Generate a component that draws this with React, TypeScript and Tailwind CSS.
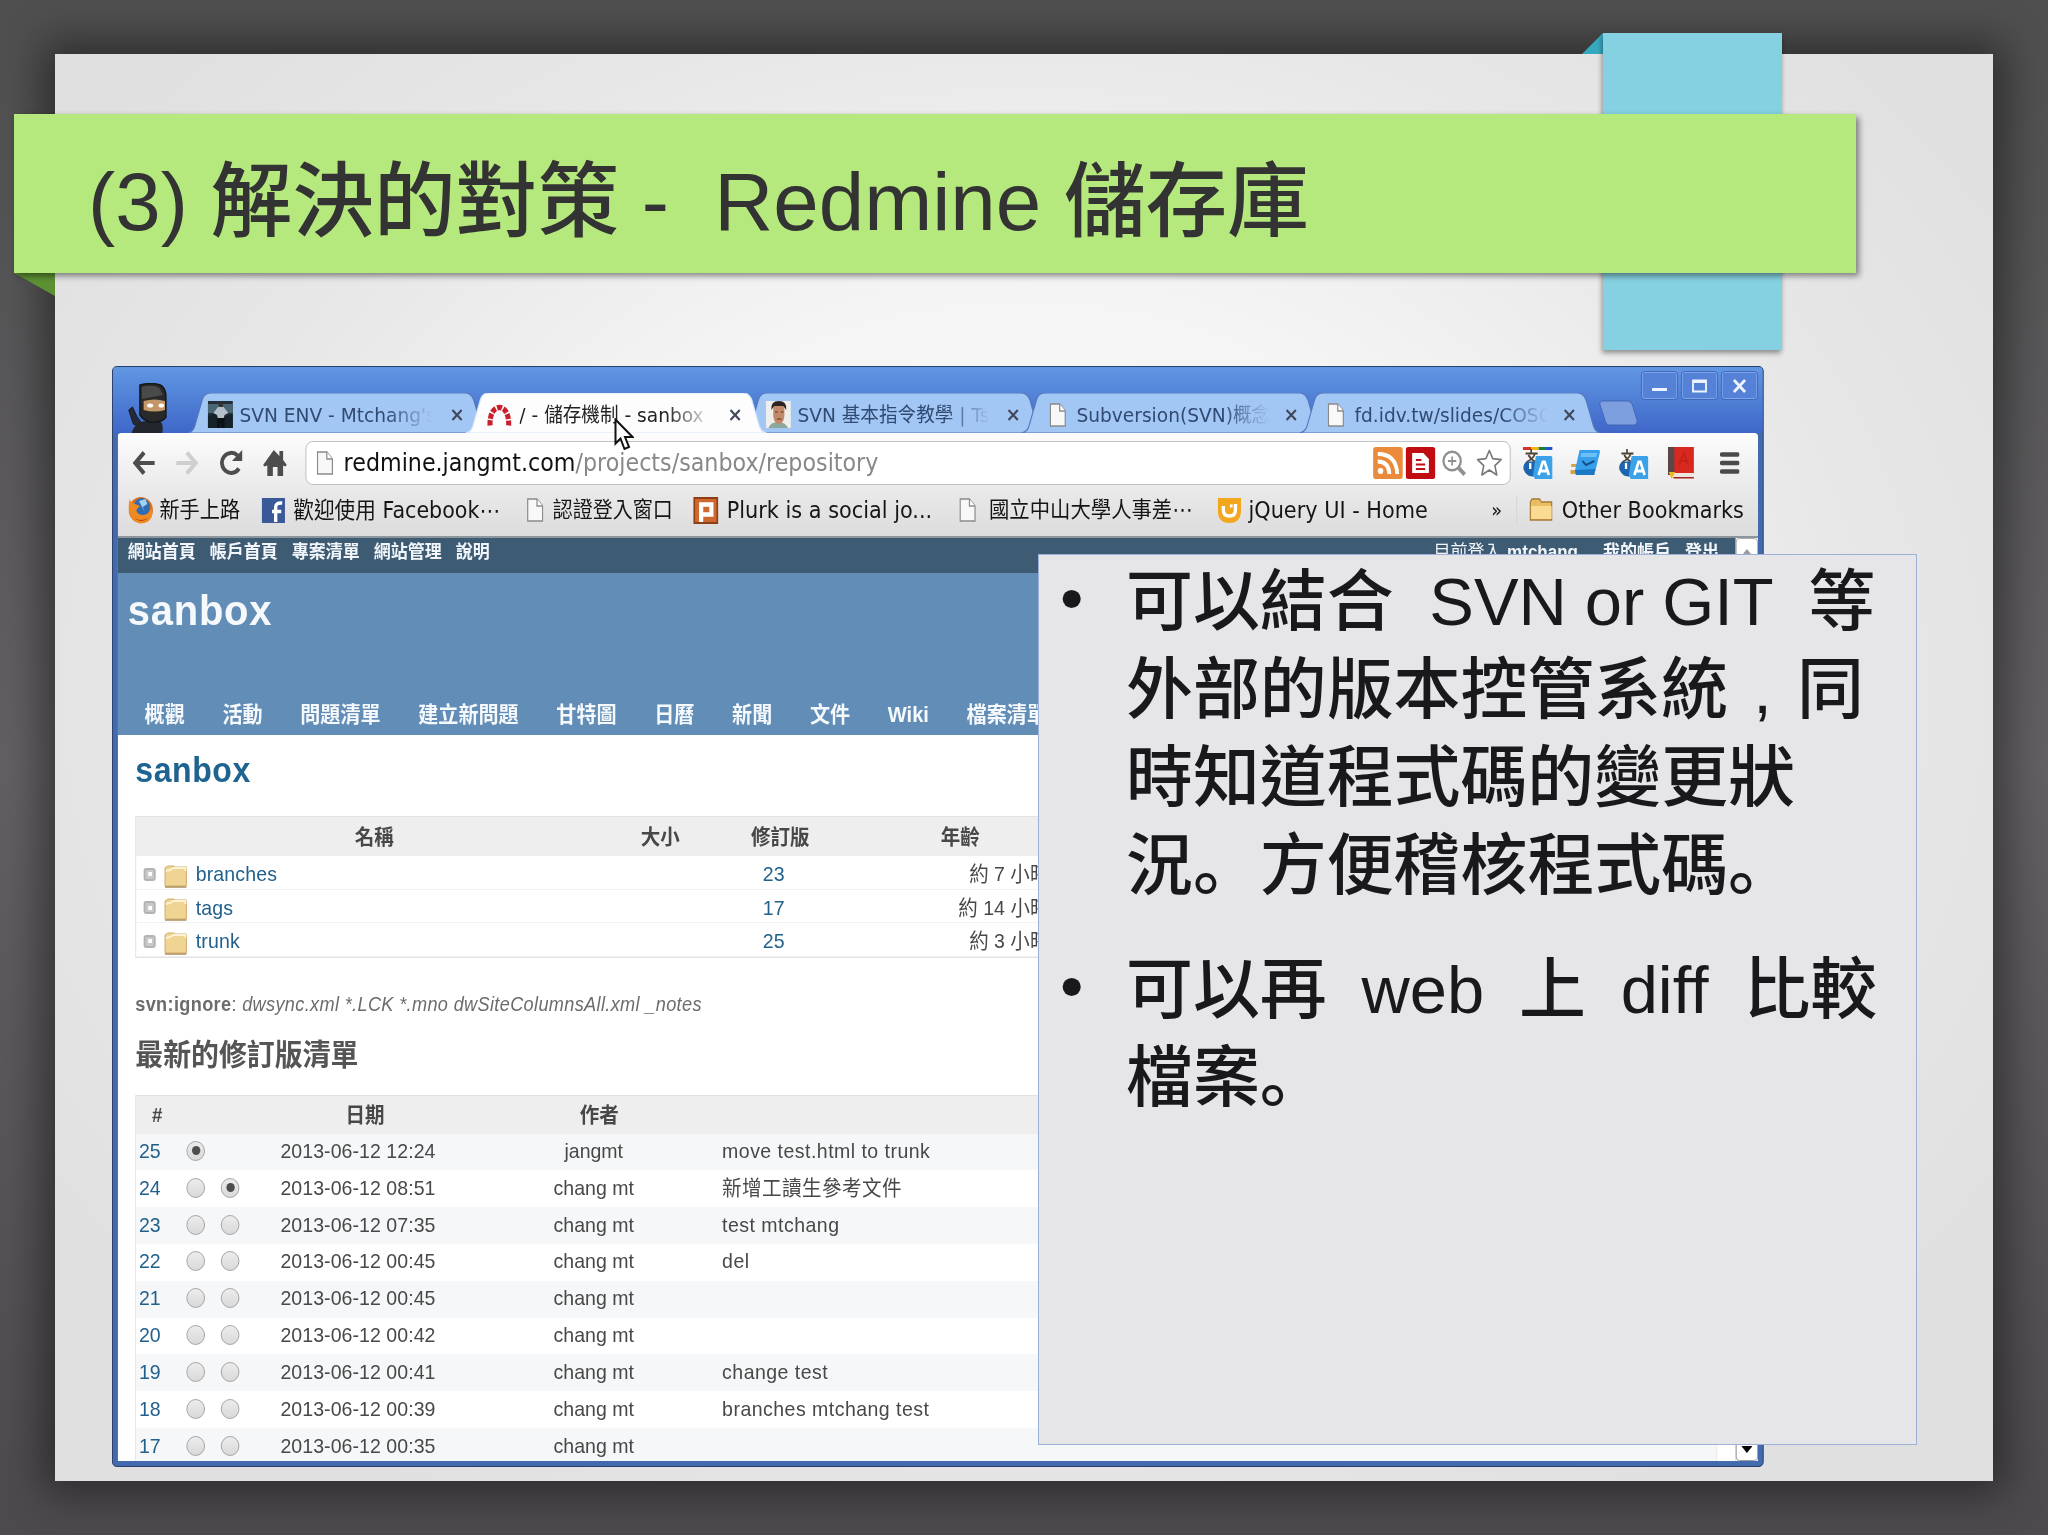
import React from 'react'

type TabType = { title: React.ReactNode; icon: React.ReactNode; active?: boolean; iconWidth: string }
type RevisionType = { id: number; left?: boolean; right?: boolean; hideRight?: boolean; date: string; author: string; comment?: string }

const revisions: RevisionType[] = [
    { id: 25, left: true, hideRight: true, date: '2013-06-12 12:24', author: 'jangmt', comment: 'move test.html to trunk' },
    { id: 24, right: true, date: '2013-06-12 08:51', author: 'chang mt', comment: '新增工讀生參考文件' },
    { id: 23, date: '2013-06-12 07:35', author: 'chang mt', comment: 'test mtchang' },
    { id: 22, date: '2013-06-12 00:45', author: 'chang mt', comment: 'del' },
    { id: 21, date: '2013-06-12 00:45', author: 'chang mt' },
    { id: 20, date: '2013-06-12 00:42', author: 'chang mt' },
    { id: 19, date: '2013-06-12 00:41', author: 'chang mt', comment: 'change test' },
    { id: 18, date: '2013-06-12 00:39', author: 'chang mt', comment: 'branches mtchang test' },
    { id: 17, date: '2013-06-12 00:35', author: 'chang mt' },
]

const folders = [
    { name: 'branches', rev: 23, age: '約 7 小時' },
    { name: 'tags', rev: 17, age: '約 14 小時' },
    { name: 'trunk', rev: 25, age: '約 3 小時' },
]

const menu = ['概觀', '活動', '問題清單', '建立新問題', '甘特圖', '日曆', '新聞', '文件', 'Wiki', '檔案清單']

function PageIcon() {
    return (
        <svg viewBox="0 0 18 24" className="h-6 w-[18px] shrink-0">
            <path d="M1 1h10l6 7v15H1z" fill="#f8f8f8" stroke="#8a8a8a" strokeWidth="1.3" />
            <path d="M11 1v7h6" fill="#fff" stroke="#8a8a8a" strokeWidth="1.3" />
        </svg>
    )
}

function NinjaIcon() {
    return (
        <svg viewBox="0 0 48 50" className="h-[50px] w-12">
            <path d="M1 27l4-3 5 10 5 6-2 4-7-3z" fill="#252a35" stroke="#111827" />
            <path d="M4 50c3-9 10-12 17-12h13c4 2 4 7 3 12z" fill="#23262d" />
            <path d="M13 2q12-3 22 0 6 3 6 12v20q-4 6-16 5-8-1-12-7z" fill="#292929" stroke="#14171c" strokeWidth="1.5" />
            <path d="M15 4q12-3 19 1l4 7-23 4z" fill="#4a4a4a" />
            <path d="M17 18q12-3 23 0v9q-11 3-23 0z" fill="#c49768" />
            <ellipse cx="24" cy="22.500" rx="3.300" ry="2" fill="#fff" />
            <ellipse cx="36" cy="22.500" rx="3" ry="2" fill="#fff" />
        </svg>
    )
}

function MenPhoto() {
    return (
        <svg viewBox="0 0 27 27" className="h-[27px] w-[27px]">
            <path d="M0 0h27v27H0z" fill="#23303a" />
            <path d="M0 3h27v9H0z" fill="#4b6673" />
            <path d="M0 16l8-4 2 3h10l7-2v14H0z" fill="#16222a" />
            <circle cx="14" cy="4" r="2.5" fill="#34302e" />
            <path d="M11 6h6l5 6-4 2-1 4h-6l-1-4-4-2z" fill="#b3bfc9" />
            <path d="M10 17h8v10h-3l-1-6-1 6h-3z" fill="#0d1114" />
        </svg>
    )
}

function RedmineIcon() {
    return (
        <svg viewBox="0 0 27 22" className="h-[22px] w-[27px]">
            <path d="M3.500 21.500C3 11 7 3.500 13.500 3.500S24 11 23.500 21.500" fill="none" stroke="#c8202c" strokeWidth="5.500" strokeDasharray="5.200 1.600" />
        </svg>
    )
}

function FacePhoto() {
    return (
        <svg viewBox="0 0 27 27" className="h-[27px] w-[27px]">
            <path d="M0 0h27v27H0z" fill="#eeeeea" />
            <path d="M3 27q2-6 10-6t11 6z" fill="#8da79c" />
            <path d="M8 4h12v11q-1 8-6 8t-6-8z" fill="#c18a6a" />
            <path d="M6 9q-1-9 8-9t8 9l-3-4H9z" fill="#2c2422" />
            <path d="M10 11h3m3 0h3m-7 7h5" stroke="#5b3327" />
        </svg>
    )
}

const tabs: TabType[] = [
    { title: "SVN ENV - Mtchang's", icon: <MenPhoto />, iconWidth: 'ml-[-2px] w-[34px]' },
    { title: '/ - 儲存機制 - sanbox -', icon: <RedmineIcon />, active: true, iconWidth: 'ml-[-1px] w-[35px]' },
    { title: 'SVN 基本指令教學 | Tsu', icon: <FacePhoto />, iconWidth: 'w-[34px]' },
    { title: 'Subversion(SVN)概念', icon: <PageIcon />, iconWidth: 'ml-[6px] w-[29px]' },
    { title: 'fd.idv.tw/slides/COSC', icon: <PageIcon />, iconWidth: 'ml-[6px] w-[29px]' },
]

function Tab({ tab }: { tab: TabType }) {
    return (
        <div className={tab.active ? 'relative z-10 mr-[-25px] h-10 w-[324px]' : 'relative mr-[-25px] h-10 w-[324px]'}>
            <svg viewBox="0 0 324 40" className="absolute inset-0 h-10 w-[324px]">
                <path
                    d="M0 40q6-1 8-7L16 7q2-7 9-7h274q6 0 9 7l8 26q2 6 8 7z"
                    fill={tab.active ? '#fdfdfe' : '#a3c7f5'}
                    stroke={tab.active ? '#d6e4fa' : '#5578bd'}
                    strokeWidth="1.2"
                />
            </svg>
            <div className="relative flex h-full items-center pl-6 pt-[3px]">
                <span className={tab.iconWidth}>{tab.icon}</span>
                <span className={`w-[226px] whitespace-nowrap text-xl leading-8 mask-[linear-gradient(to_right,black_70%,transparent_92%)] ${tab.active ? 'text-[#222]' : 'text-[#304a70]'}`}>
                    {tab.title}
                </span>
                <svg viewBox="0 0 12 12" className="absolute right-[28px] top-4 h-3 w-3">
                    <path d="M1 1l10 10M11 1L1 11" stroke="#41495a" strokeWidth="2.400" />
                </svg>
            </div>
        </div>
    )
}

function TitleBar() {
    return (
        <div className="flex h-[66px] items-end bg-linear-to-b from-[#6197e2] to-[#3f67c9]">
            <div className="w-[80px] pl-[16px]"><NinjaIcon /></div>
            {tabs.map((tab, i) => <Tab key={i} tab={tab} />)}
            <svg viewBox="0 0 41 26" className="mb-[7px] ml-[23px] h-[26px] w-[41px]">
                <path d="M4 1h27q3 0 5 4l5 16q0 4-3 4H11q-3 0-4-3L1 5q-1-4 3-4z" fill="#7d9fe0" stroke="#4266b4" />
            </svg>
            <div className="ml-auto mr-[6px] flex gap-[5px] self-start pt-[5px]">
                {['min', 'max', 'close'].map((kind) => (
                    <div key={kind} className="flex h-[27px] w-[38px] items-center justify-center rounded-[3px] border border-[#7fa6ec] bg-[#5582d6] outline outline-[#3f68bb]">
                        <svg viewBox="0 0 18 16" className="h-4 w-[18px]" fill="none" stroke="#eef4ff">
                            {kind === 'min' && <path d="M1 11.500h16" strokeWidth="3" />}
                            {kind === 'max' && <path d="M2 2.500h14v11H2zM2 4h14" strokeWidth="2" />}
                            {kind === 'close' && <path d="M3 2l12 12M15 2L3 14" strokeWidth="3" />}
                        </svg>
                    </div>
                ))}
            </div>
        </div>
    )
}

function TranslateIcon({ bar }: { bar?: boolean }) {
    return (
        <svg viewBox="0 0 32 32" className="h-8 w-8">
            {bar && <path d="M0 1.500h9" stroke="#d93025" strokeWidth="3" />}
            {bar && <path d="M9 1.500h8" stroke="#f4b400" strokeWidth="3" />}
            {bar && <path d="M17 1.500h7" stroke="#188038" strokeWidth="3" />}
            {bar && <path d="M24 1.500h8" stroke="#1a56c4" strokeWidth="3" />}
            <path d="M9 2v4M3 6.500h13M13 7q-2 5-9 8M6 8q3 5 8 7" stroke="#4b4336" strokeWidth="1.800" fill="none" />
            <path d="M3 15q-5 6 0 11 4 5 12 3V14z" fill="#1c64ad" />
            <path d="M8 16v6" stroke="#fff" strokeWidth="2.500" />
            <path d="M14 9h16q2 0 2 2v21H13l-2-4z" fill="#3ba2e8" />
            <path d="M17 28l4.500-13h2L28 28M19 24h8" stroke="#fff" strokeWidth="2.800" fill="none" />
        </svg>
    )
}

function Toolbar() {
    return (
        <div className="flex h-[59px] items-center pl-4 font-['DejaVu_Sans','Noto_Sans_CJK_TC',sans-serif]">
            <svg viewBox="0 0 24 24" className="mr-[23px] h-6 w-6" fill="none" stroke="#4d4d4d" strokeWidth="4.200">
                <path d="M12.500 1.500L3 12l9.500 10.500M3 12h21" />
            </svg>
            <svg viewBox="0 0 24 24" className="mr-[22px] h-6 w-6" fill="none" stroke="#cfcfcf" strokeWidth="4.200">
                <path d="M11.500 1.500L21 12l-9.500 10.500M21 12H0" />
            </svg>
            <svg viewBox="0 0 26 26" className="mr-[21px] h-[26px] w-[26px]">
                <path d="M21.500 18.500A10 10 0 1 1 20 5.500" fill="none" stroke="#4d4d4d" strokeWidth="4" />
                <path d="M25 0v11H14z" fill="#4d4d4d" />
            </svg>
            <svg viewBox="0 0 26 26" className="mr-[20px] h-[26px] w-[26px]" fill="#4d4d4d">
                <path d="M12 0l6 6V1h4v9l4 5-1.500 1.500-2.500-1V26h-6v-9h-5v9H5V15.500l-3 1L.500 15z" />
            </svg>
            <div className="flex h-11 w-[1296px] items-center rounded-lg border-[1.5px] border-[#bfbfbf] bg-white pl-[11px] pr-[8px]">
                <PageIcon />
                <span className="ml-[11px] text-[23.900px] leading-10 text-[#111]">redmine.jangmt.com<span className="text-[#888]">/projects/sanbox/repository</span></span>
                <svg viewBox="0 0 32 32" className="ml-auto mr-[3px] h-8 w-8">
                    <rect width="32" height="32" rx="3" fill="#ea8b3c" />
                    <circle cx="8" cy="24" r="3" fill="#fff" />
                    <path d="M5 14.500q12 0 12.500 12.500M5 7q20 0 21 20" fill="none" stroke="#fff" strokeWidth="4" />
                </svg>
                <svg viewBox="0 0 32 32" className="mr-[7px] h-8 w-8">
                    <rect width="32" height="32" rx="3" fill="#c00d12" />
                    <path d="M7 6h12l6 6v14H7z" fill="#fff" />
                    <path d="M11 13h6m-6 4.500h10m-10 4.500h10" stroke="#c00d12" strokeWidth="2.200" />
                </svg>
                <svg viewBox="0 0 26 26" className="mr-[11px] h-[26px] w-[26px]" fill="none" stroke="#909090">
                    <circle cx="11" cy="11" r="9.300" strokeWidth="2.400" />
                    <path d="M6.500 11h9M11 6.500v9" strokeWidth="1.800" />
                    <path d="M18 18l6.500 6.500" strokeWidth="4" />
                </svg>
                <svg viewBox="0 0 28 28" className="h-7 w-7">
                    <path d="M14 1.500l3.700 8.200 9 .9-6.700 6 2 9.400-8-5-8 5 2-9.400-6.700-6 9-.9z" fill="#fff" stroke="#777" strokeWidth="1.700" strokeLinejoin="round" />
                </svg>
            </div>
            <div className="ml-[13px] flex items-center">
                <span className="mr-[19px]"><TranslateIcon bar /></span>
                <svg viewBox="0 0 32 28" className="mr-5 h-[28px] w-8">
                    <path d="M1 15h12v3H1zm-1 6h14v4H0z" fill="#d8a24a" />
                    <path d="M10 1h21q1 0 1 2l-5 19H5z" fill="#36a0ec" />
                    <path d="M12 4h17l-1 4H11z" fill="#6cc0f6" />
                    <path d="M5 21l22-1-1 6H6z" fill="#1b78c4" />
                    <path d="M13 12l4 4 9-4" fill="none" stroke="#14508a" strokeWidth="2" />
                </svg>
                <span className="mr-[21px]"><TranslateIcon /></span>
                <svg viewBox="0 0 28 32" className="mr-7 h-8 w-7">
                    <path d="M0 0h28v28H0z" fill="#d9291f" />
                    <path d="M0 0h7v28H0z" fill="#5c4747" />
                    <path d="M2 26h26v4H4z" fill="#ede5e0" />
                    <path d="M6 30h22v1.500H6z" fill="#a62319" />
                    <path d="M1 25h7l-4 7z" fill="#f2b81f" />
                    <path d="M12 18l5-12 5 12m-8-4h6" fill="none" stroke="#c3211a" strokeWidth="1.800" />
                </svg>
                <svg viewBox="0 0 21 22" className="h-[22px] w-[21px]" stroke="#4a4a4a" strokeWidth="4.400" strokeLinecap="round">
                    <path d="M2 2.500h17M2 11h17M2 19.500h17" />
                </svg>
            </div>
        </div>
    )
}

function FolderIcon() {
    return (
        <svg viewBox="0 0 26 24" className="h-6 w-[26px] shrink-0">
            <path d="M1 22V4l2-3h8l2 3h11v18z" fill="#e9bd62" stroke="#a67a35" strokeWidth="1.300" />
            <path d="M2 8h22v13H2z" fill="#fbdb91" />
        </svg>
    )
}

function BookmarkBar() {
    return (
        <div className="flex h-[36px] items-center whitespace-nowrap pl-[11px] font-['DejaVu_Sans','Noto_Sans_CJK_TC',sans-serif] text-[22.400px] leading-[36px] text-[#151515]">
            <div className="flex w-[144px] items-center gap-[6px] text-[21.700px]">
                <svg viewBox="0 0 28 28" className="h-7 w-7 shrink-0">
                    <circle cx="14" cy="14" r="13" fill="#e0701a" />
                    <circle cx="15" cy="11" r="9" fill="#2f6cb4" />
                    <path d="M12 5l7-2 2 5-5 3 2 5z" fill="#9fd0ee" />
                    <path d="M2 3q1 4 6 5l5 2-4 4q1 5 8 5 7-1 8-7 4 9-4 14-9 4-16-3Q-1 15 2 3z" fill="#ef8a22" />
                    <path d="M5 20q7 7 17 2-8 7-17-2z" fill="#b93d12" />
                </svg>
                新手上路
            </div>
            <div className="flex w-[285px] items-center gap-[9px] text-[22.200px]">
                <svg viewBox="0 0 25 25" className="h-[25px] w-[25px] shrink-0">
                    <path d="M0 0h25v25H0z" fill="#3b5998" />
                    <path d="M15 24V9q0-4.500 7-4M11 13.500h10" fill="none" stroke="#fff" strokeWidth="3.600" />
                </svg>
                歡迎使用 Facebook⋯
            </div>
            <div className="flex w-[179px] items-center gap-[10px] text-[21.500px]"><PageIcon />認證登入窗口</div>
            <div className="flex w-[286px] items-center gap-[9px]">
                <svg viewBox="0 0 27 27" className="h-[27px] w-[27px] shrink-0">
                    <path d="M1 1h25v25H1z" fill="#cf682f" stroke="#8f3f16" strokeWidth="2" />
                    <path d="M8.500 25V7.500h11v10h-10" fill="none" stroke="#fff" strokeWidth="4.500" />
                </svg>
                Plurk is a social jo...
            </div>
            <div className="flex w-[278px] items-center gap-[14px] text-[21.900px]"><PageIcon />國立中山大學人事差⋯</div>
            <div className="flex w-[294px] items-center gap-[8px]">
                <svg viewBox="0 0 25 25" className="h-[25px] w-[25px] shrink-0">
                    <path d="M0 0h25v12q0 13-12.500 13T0 12z" fill="#f3a71f" />
                    <path d="M6 8v4q0 6 6.500 6t6.500-6V6" fill="none" stroke="#fff" strokeWidth="3.600" />
                    <path d="M13 8h3" stroke="#fff" strokeWidth="3" />
                </svg>
                jQuery UI - Home
            </div>
            <span className="w-[27px] text-[19px]">»</span>
            <span className="mr-[13px] h-7 w-px bg-[#d3d3dc]" />
            <div className="flex items-center gap-[9px]"><FolderIcon />Other Bookmarks</div>
        </div>
    )
}

function TreeFolder() {
    return (
        <svg viewBox="0 0 25 23" className="ml-[9px] mr-[9px] mt-1 h-[23px] w-[25px]">
            <path d="M1 21V3l3-2h6l2 1h12v19z" fill="#efd493" stroke="#cdaa66" />
            <path d="M2 6q4 0 8-3h13v3" fill="none" stroke="#fdf3d2" strokeWidth="2" />
            <path d="M1 22h23" stroke="#ad8d5a" strokeWidth="1.500" />
        </svg>
    )
}

function Radio({ checked }: { checked?: boolean }) {
    return (
        <span className="flex h-5 w-5 items-center justify-center rounded-full border-[1.5px] border-[#a2a2a2] bg-linear-to-b from-[#ececec] to-[#d9d9d9]">
            {checked && <span className="h-[9px] w-[9px] rounded-full bg-[#4d4d4d]" />}
        </span>
    )
}

function Redmine() {
    return (
        <div className="flex-1 overflow-hidden bg-white font-['Liberation_Sans','Noto_Sans_CJK_TC',sans-serif] text-[21px] text-[#484848]">
            <div className="flex h-[35px] bg-[#3e5b74] pl-[11px] pr-[18px] text-[18.300px] font-bold leading-[28px] text-[#f2f6fa]">
                <div className="flex gap-[15px]">
                    <span>網站首頁</span><span>帳戶首頁</span><span>專案清單</span><span>網站管理</span><span>說明</span>
                </div>
                <div className="ml-auto flex">
                    <span className="mr-[6px] font-normal">目前登入</span><span className="mr-[27px]">mtchang</span>
                    <span className="mr-[15px]">我的帳戶</span><span>登出</span>
                </div>
            </div>
            <div className="flex h-[162px] flex-col justify-between bg-[#628db6] font-bold text-[#f6f9fc]">
                <h1 className="pl-[11px] pt-[9px] text-[43px] leading-[56px] tracking-[0.8px]">sanbox</h1>
                <div className="flex gap-[40.500px] whitespace-nowrap pl-[29px] text-[21.600px] leading-[40px]">
                    {menu.map((item) => <span key={item}>{item}</span>)}
                </div>
            </div>
            <div className="pl-[19px]">
                <h2 className="pt-[14px] text-[34.500px] font-bold leading-[42px] tracking-[0.6px] text-[#1f6390]">sanbox</h2>
                <div className="mt-[25px] w-[1701px] border border-[#e3e2e3]">
                    <div className="grid h-[39px] grid-cols-[512px_103px_155px_232px_1fr] items-center bg-[#efeeef] text-center font-bold leading-[39px]">
                        <span>名稱</span><span>大小</span><span>修訂版</span><span>年齡</span>
                    </div>
                    {folders.map((folder) => (
                        <div key={folder.name} className="grid h-[33.500px] grid-cols-[512px_103px_155px_232px_1fr] items-center border-b border-[#f3f3f3] pt-[2px] leading-[32px]">
                            <span className="flex items-center pl-[8px] tracking-[0.15px] text-[#23618d]">
                                <span className="flex h-[13px] w-[13px] items-center justify-center rounded-[3px] border-2 border-[#b3b3b3] bg-[#c9c9c9]"><span className="h-[4px] w-[4px] bg-white" /></span>
                                <TreeFolder />
                                {folder.name}
                            </span>
                            <span />
                            <span className="pr-[14px] text-center text-[#23618d]">{folder.rev}</span>
                            <span className="pr-[20px] text-right">{folder.age}</span>
                        </div>
                    ))}
                </div>
                <p className="mt-[32px] text-[19.500px] leading-[28px] tracking-[0.37px] text-[#6c6c6c]"><b>svn:ignore</b>: <i>dwsync.xml *.LCK *.mno dwSiteColumnsAll.xml _notes</i></p>
                <h3 className="mt-[15px] text-[30px] font-bold leading-[44px] text-[#555]">最新的修訂版清單</h3>
                <div className="mt-[18px] w-[1701px] border border-[#e3e2e3]">
                    <div className="grid h-[38px] grid-cols-[45px_38px_36px_254px_250px_1fr] items-center bg-[#efeeef] text-center font-bold leading-[38px]">
                        <span className="text-xl">#</span><span /><span /><span>日期</span><span>作者</span><span />
                    </div>
                    {revisions.map((rev) => (
                        <div key={rev.id} className="grid h-[36.830px] grid-cols-[45px_38px_36px_254px_250px_1fr] items-center pb-[2px] leading-[34px] odd:bg-white even:bg-[#f6f7f8]">
                            <span className="pl-[3px] text-[#23618d]">{rev.id}</span>
                            <span className="flex justify-center"><Radio checked={rev.left} /></span>
                            <span className="flex justify-center">{!rev.hideRight && <Radio checked={rev.right} />}</span>
                            <span className="pr-[15px] text-center tracking-[0.06px]">{rev.date}</span>
                            <span className="pr-[12px] text-center">{rev.author}</span>
                            <span className="pl-[7px] tracking-[0.5px]">{rev.comment}</span>
                        </div>
                    ))}
                </div>
            </div>
        </div>
    )
}

function ScrollBar() {
    return (
        <div className="flex w-6 flex-col justify-between bg-[#f4f4f4]">
            <span className="flex h-7 items-center justify-center rounded-[4px] border border-[#aaa] bg-white">
                <svg viewBox="0 0 12 7" className="h-[7px] w-3"><path d="M6 0l6 7H0z" fill="#999" /></svg>
            </span>
            <span className="flex h-7 items-center justify-center rounded-[4px] border border-[#999] bg-white">
                <svg viewBox="0 0 12 7" className="mt-1 h-[7px] w-3"><path d="M0 0h12L6 7z" fill="#000" /></svg>
            </span>
        </div>
    )
}

function Browser() {
    return (
        <div className="flex h-[1101px] w-[1776px] origin-top-left scale-x-[0.93] flex-col overflow-hidden rounded-[5px] border border-[#263c68] bg-[#4369ae] font-['DejaVu_Sans','Noto_Sans_CJK_TC',sans-serif]">
            <TitleBar />
            <div className="mx-[5px] mb-[5px] flex flex-1 flex-col overflow-hidden">
                <div className="h-[105px] rounded-t-[4px] border-b-2 border-[#8d969d] bg-linear-to-b from-[#fdfdfd] via-[#ebebec] to-[#dcdcdd]">
                    <Toolbar />
                    <BookmarkBar />
                </div>
                <div className="flex flex-1 overflow-hidden">
                    <Redmine />
                    <ScrollBar />
                </div>
            </div>
        </div>
    )
}

function Notes() {
    return (
        <ul className="h-[891px] w-[879px] whitespace-pre border-[1.5px] border-[#9db1d8] bg-[#e6e5e8] pt-[3px] text-[66.900px] font-medium leading-[88px] text-[#19191b]">
            <li className="flex">
                <span className="mt-[-4px] w-[87px] pl-[21px]">•</span>
                <p className="[word-spacing:-0.7px]">
                    可以結合{'  '}SVN or GIT{'  '}等<br />
                    外部的版本控管系統<span className="inline-block w-[69px] text-center">,</span>同<br />
                    時知道程式碼的變更狀<br />
                    況<Stop />方便稽核程式碼<Stop />
                </p>
            </li>
            <li className="mt-9 flex">
                <span className="mt-[-4px] w-[87px] pl-[21px]">•</span>
                <p className="[word-spacing:-1.2px]">
                    可以再{'  '}web{'  '}上{'  '}diff{'  '}比較<br />
                    檔案<Stop />
                </p>
            </li>
        </ul>
    )
}

// the SC face keeps the full stop in the lower left of its box
function Stop() {
    return <span className="font-['Noto_Sans_CJK_SC',sans-serif] leading-[0]">。</span>
}

function App() {
    return (
        <div className="relative h-[1535px] w-[2048px] overflow-hidden bg-linear-to-b from-[#4f4f4f] via-[#636064] to-[#4d4a4d] font-['Liberation_Sans','Noto_Sans_CJK_TC',sans-serif]">
            <div className="absolute left-[55px] top-[54px] h-[1427px] w-[1938px] bg-[radial-gradient(ellipse_at_50%_45%,#fbfaf9_0%,#f6f5f6_35%,#e8e7e8_62%,#e0e0e0_85%)] shadow-[0_0_40px_12px_rgba(0,0,0,0.45)]" />
            <svg viewBox="0 0 22 21" className="absolute left-[1582px] top-[33px] h-[21px] w-[22px]"><path d="M0 21L21 0v21z" fill="#37a9bf" /></svg>
            <div className="absolute left-[1603px] top-[33px] h-[317px] w-[179px] bg-[#86d1e1] shadow-[-1px_3px_5px_rgba(0,0,0,0.4)]" />
            <svg viewBox="0 0 41 24" className="absolute left-[14px] top-[273px] h-6 w-[41px]"><path d="M0 0h41v23z" fill="#5d9033" /></svg>
            <div className="absolute left-[14px] top-[114px] flex h-[159px] w-[1842px] items-center whitespace-pre bg-[#b5e87d] pl-[74px] pt-[18px] text-[81.700px] font-medium text-[#333] shadow-[3px_3px_6px_rgba(0,0,0,0.45)]">
                (3) 解決的對策 -{'  '}Redmine 儲存庫
            </div>
            <div className="absolute left-[112px] top-[366px]"><Browser /></div>
            <div className="absolute left-[1038px] top-[554px]"><Notes /></div>
            <svg viewBox="0 0 20 33" className="absolute left-[614px] top-[418px] h-[33px] w-5">
                <path d="M1.500 1.500v24l5-5 4 10.500 4.500-2-4-10h7.500z" fill="#fff" stroke="#111" strokeWidth="2" />
            </svg>
        </div>
    )
}

export default App
